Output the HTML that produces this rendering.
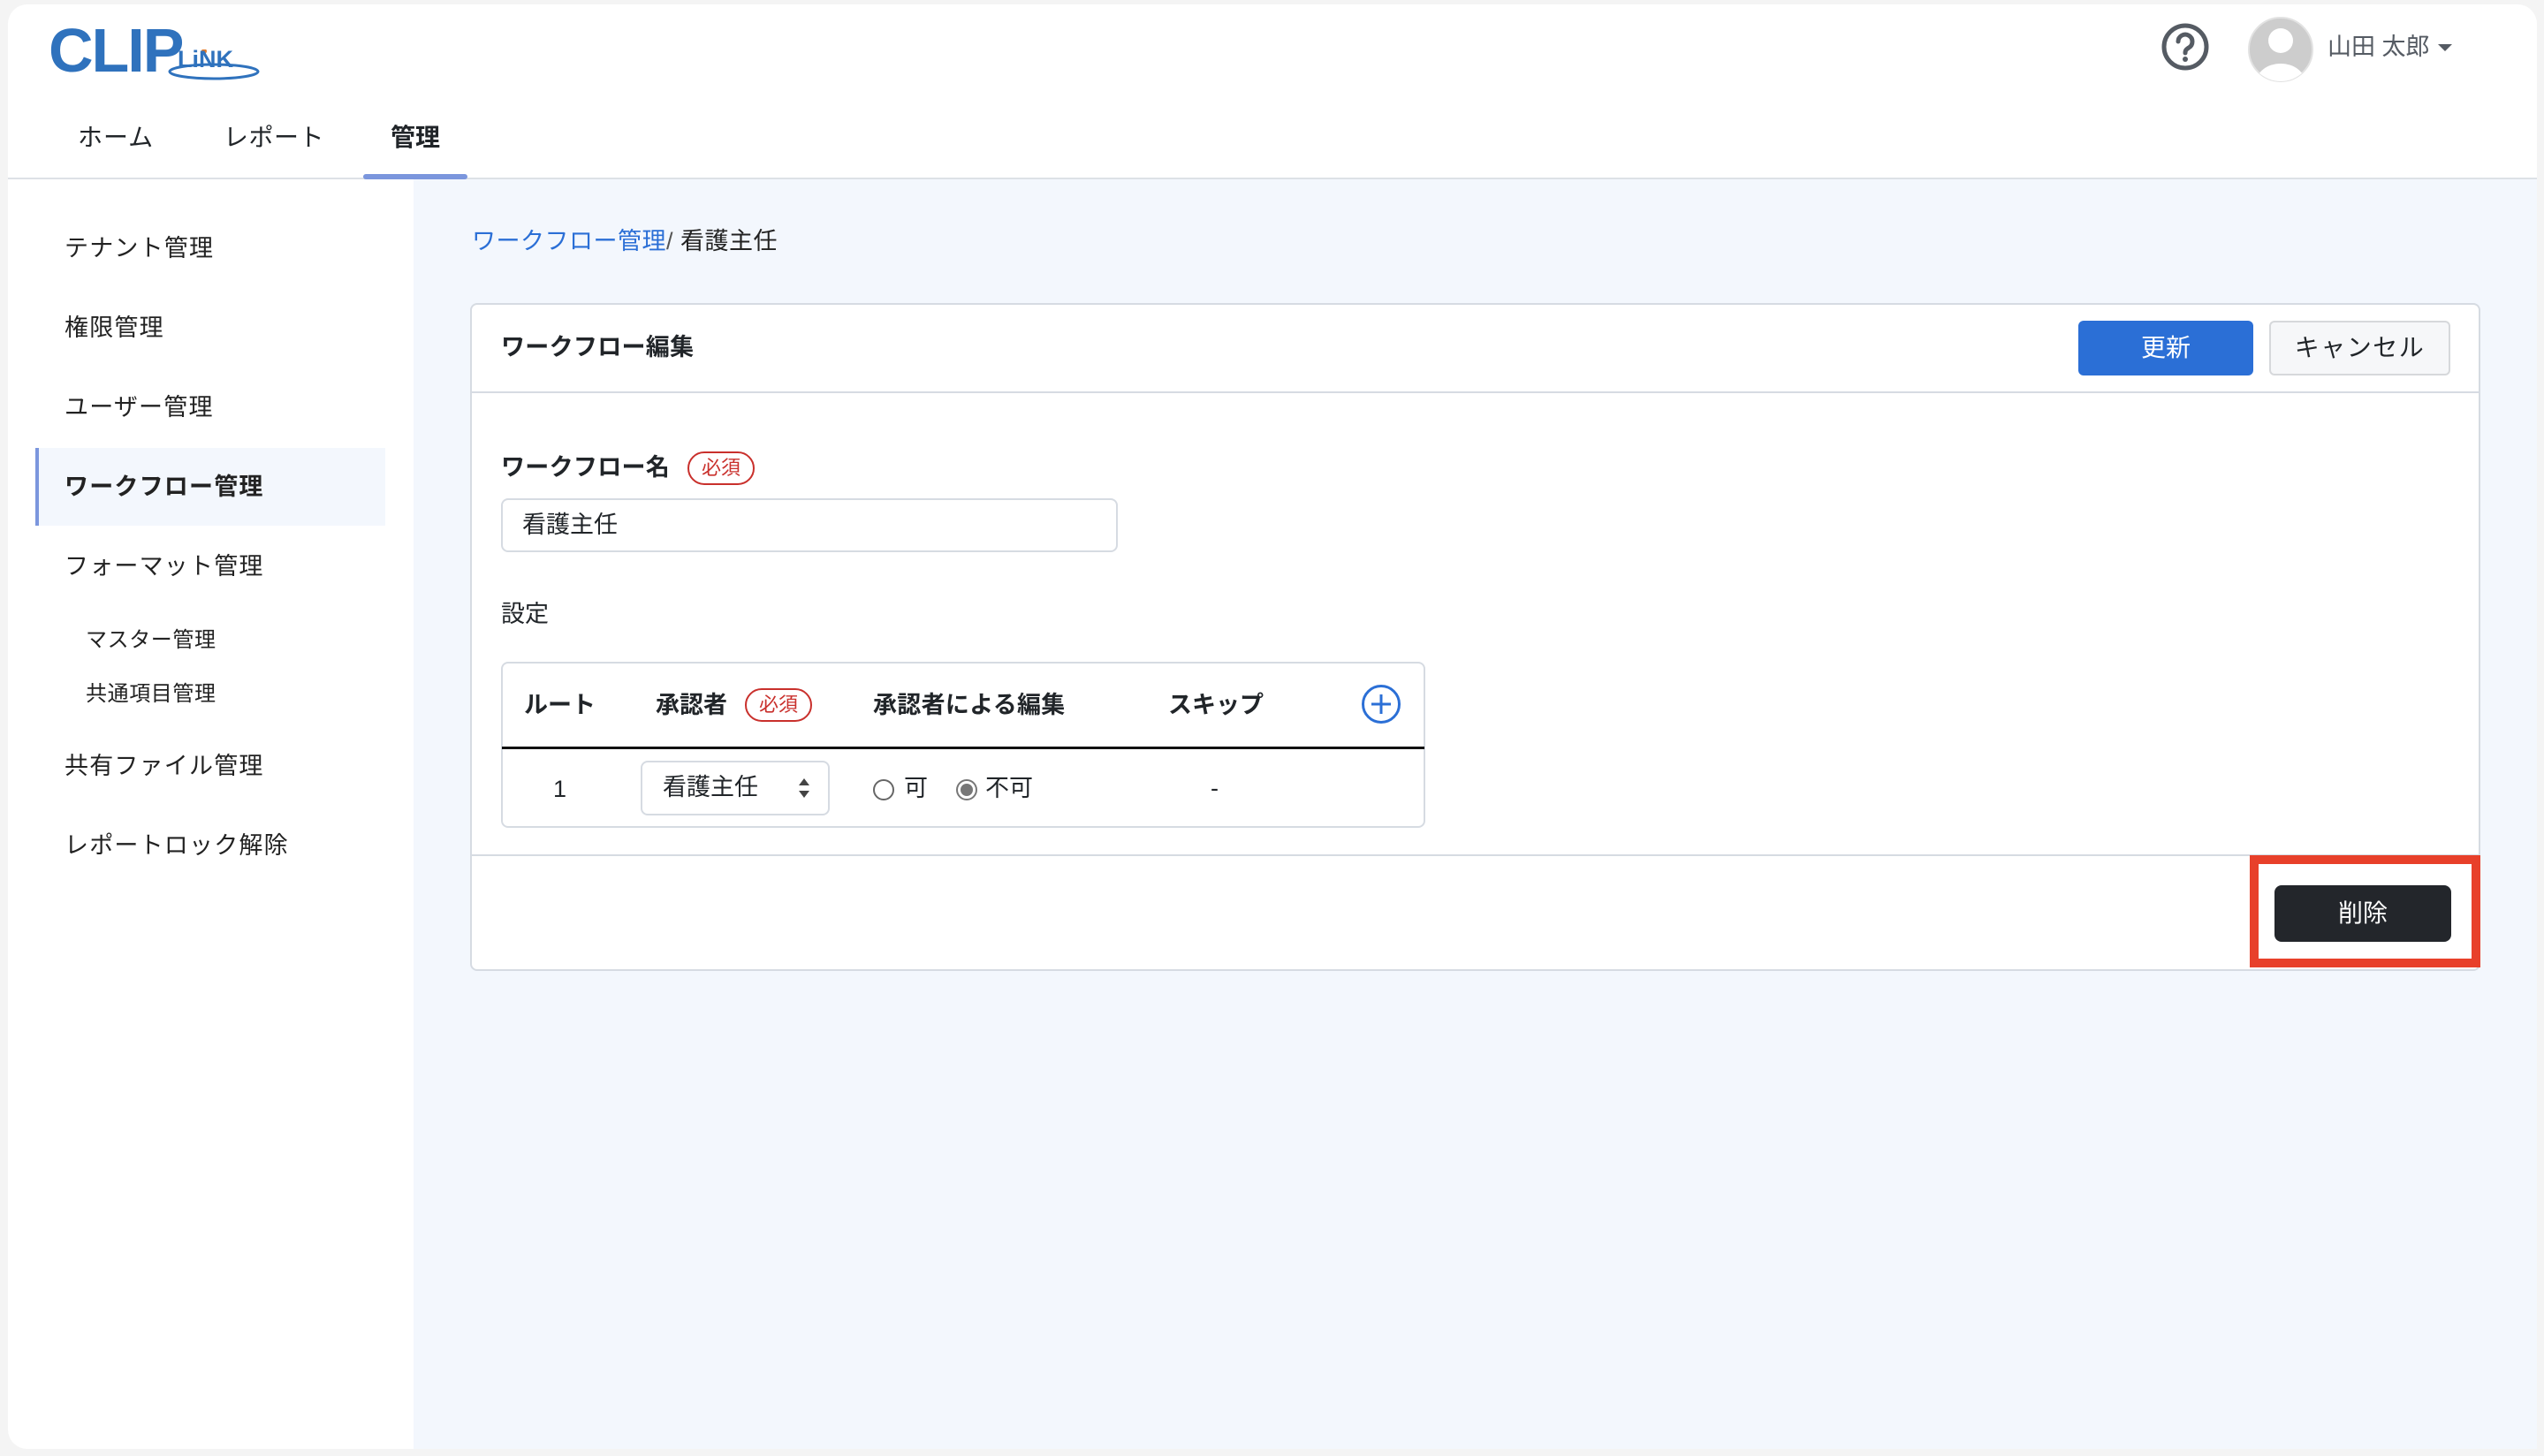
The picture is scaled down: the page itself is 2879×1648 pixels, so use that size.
<!DOCTYPE html>
<html><head><meta charset="utf-8"><style>
*{box-sizing:border-box;margin:0;padding:0}
body{width:2879px;height:1648px;background:#f4f4f4;font-family:"Liberation Sans","Noto Sans CJK JP",sans-serif;color:#212529;position:relative;overflow:hidden}
.abs{position:absolute}
.frame{left:9px;top:5px;width:2862px;height:1635px;background:#fff;border-radius:22px;overflow:hidden}
.main{left:468px;top:203px;width:2403px;height:1437px;background:#f3f7fd}
.t{position:absolute;white-space:nowrap;line-height:1}
.side{font-size:27px;letter-spacing:1.2px;color:#222;left:73px}
.sub{font-size:24px;letter-spacing:0.6px;left:97px;color:#222}
.badge{position:absolute;border:2px solid #c9302c;color:#c9302c;border-radius:20px;font-size:22px;line-height:1;padding:6px 14px}
</style></head><body>
<div class="abs frame"></div>
<div class="abs" style="left:9px;top:201px;width:2862px;height:2px;background:#dde1e6"></div>
<div class="abs main"></div>

<!-- logo -->
<div class="t" style="left:55px;top:22px;font-size:70px;font-weight:bold;color:#2f72bd;letter-spacing:-2px">CLIP</div>
<svg class="abs" style="left:190px;top:56px" width="105" height="40"><ellipse cx="52" cy="25" rx="50" ry="8" fill="none" stroke="#2f72bd" stroke-width="3"/><circle cx="41" cy="2" r="3" fill="#e07b2c"/></svg>
<div class="t" style="left:201px;top:54px;font-size:27px;font-weight:bold;color:#2f72bd;background:transparent">LiNK</div>

<!-- nav -->
<div class="t" style="left:88px;top:142px;font-size:28px;letter-spacing:1px">ホーム</div>
<div class="t" style="left:253px;top:142px;font-size:28px;letter-spacing:0.5px">レポート</div>
<div class="t" style="left:442px;top:142px;font-size:28px;font-weight:bold">管理</div>
<div class="abs" style="left:411px;top:197px;width:118px;height:6px;background:#7b96dd;border-radius:3px"></div>

<!-- header right -->
<svg class="abs" style="left:2445px;top:25px" width="56" height="56"><circle cx="28" cy="28" r="24" fill="none" stroke="#555b63" stroke-width="5"/><path d="M20 22a8 8 0 1 1 12 7c-3 2-4 3-4 6" fill="none" stroke="#555b63" stroke-width="5" stroke-linecap="round"/><circle cx="28" cy="42" r="3" fill="#555b63"/></svg>
<svg class="abs" style="left:2543px;top:18px" width="76" height="76"><defs><clipPath id="c"><circle cx="38" cy="38" r="36"/></clipPath></defs><circle cx="38" cy="38" r="36" fill="#cdcdcd" stroke="#e2e2e2" stroke-width="2"/><g clip-path="url(#c)" fill="#fff"><circle cx="38" cy="28" r="14"/><ellipse cx="38" cy="76" rx="28" ry="22"/></g></svg>
<div class="t" style="left:2634px;top:40px;font-size:27px;color:#555b63">山田 太郎</div>
<svg class="abs" style="left:2759px;top:50px" width="16" height="10"><path d="M0 0h16L8 8z" fill="#555b63"/></svg>

<!-- sidebar -->
<div class="t side" style="top:268px">テナント管理</div>
<div class="t side" style="top:358px">権限管理</div>
<div class="t side" style="top:448px">ユーザー管理</div>
<div class="abs" style="left:40px;top:507px;width:396px;height:88px;background:#f3f7fd;border-left:4px solid #7b96dd"></div>
<div class="t side" style="top:538px;font-weight:bold">ワークフロー管理</div>
<div class="t side" style="top:628px">フォーマット管理</div>
<div class="t sub" style="top:713px">マスター管理</div>
<div class="t sub" style="top:774px">共通項目管理</div>
<div class="t side" style="top:854px">共有ファイル管理</div>
<div class="t side" style="top:944px">レポートロック解除</div>

<!-- breadcrumb -->
<div class="t" style="left:534px;top:260px;font-size:27px;color:#2b6fd6;letter-spacing:0.5px">ワークフロー管理<span style="color:#555">/</span> <span style="color:#222">看護主任</span></div>

<!-- card -->
<div class="abs" style="left:532px;top:343px;width:2275px;height:756px;background:#fff;border:2px solid #d6dbe2;border-radius:8px"></div>
<div class="abs" style="left:534px;top:443px;width:2271px;height:2px;background:#d6dbe2"></div>
<div class="abs" style="left:534px;top:967px;width:2271px;height:2px;background:#d6dbe2"></div>
<div class="t" style="left:567px;top:380px;font-size:27px;font-weight:bold;letter-spacing:0.3px">ワークフロー編集</div>
<div class="abs" style="left:2352px;top:363px;width:198px;height:62px;background:#2b6fd6;border-radius:6px;color:#fff;font-size:28px;text-align:center;line-height:62px">更新</div>
<div class="abs" style="left:2568px;top:363px;width:205px;height:62px;background:#f6f7f9;border:2px solid #d6d8db;border-radius:6px;font-size:28px;text-align:center;line-height:58px;letter-spacing:1.5px">キャンセル</div>

<div class="t" style="left:567px;top:516px;font-size:27px;font-weight:bold;letter-spacing:0.3px">ワークフロー名</div>
<div class="badge" style="left:778px;top:511px">必須</div>
<div class="abs" style="left:567px;top:564px;width:698px;height:61px;border:2px solid #d6dbe2;border-radius:8px"></div>
<div class="t" style="left:591px;top:581px;font-size:27px">看護主任</div>
<div class="t" style="left:567px;top:682px;font-size:27px">設定</div>

<!-- table -->
<div class="abs" style="left:567px;top:749px;width:1046px;height:188px;border:2px solid #d6dbe2;border-radius:8px"></div>
<div class="abs" style="left:568px;top:845px;width:1044px;height:3px;background:#111"></div>
<div class="t" style="left:593px;top:785px;font-size:27px;font-weight:bold">ルート</div>
<div class="t" style="left:742px;top:785px;font-size:27px;font-weight:bold">承認者</div>
<div class="badge" style="left:843px;top:779px">必須</div>
<div class="t" style="left:988px;top:785px;font-size:27px;font-weight:bold;letter-spacing:0.3px">承認者による編集</div>
<div class="t" style="left:1322px;top:785px;font-size:27px;font-weight:bold">スキップ</div>
<svg class="abs" style="left:1539px;top:773px" width="48" height="48"><circle cx="24" cy="24" r="20.5" fill="none" stroke="#2b6fd6" stroke-width="3"/><path d="M24 13v22M13 24h22" stroke="#2b6fd6" stroke-width="3"/></svg>

<div class="t" style="left:626px;top:880px;font-size:27px">1</div>
<div class="abs" style="left:725px;top:861px;width:214px;height:62px;border:2px solid #d6dbe2;border-radius:8px"></div>
<div class="t" style="left:750px;top:878px;font-size:27px">看護主任</div>
<svg class="abs" style="left:903px;top:879px" width="14" height="26"><path d="M1 10L7 2l6 8zM1 16l6 8 6-8z" fill="#444"/></svg>
<svg class="abs" style="left:986px;top:880px" width="28" height="28"><circle cx="14" cy="14" r="11" fill="#fff" stroke="#666" stroke-width="2"/></svg>
<div class="t" style="left:1023px;top:879px;font-size:27px">可</div>
<svg class="abs" style="left:1080px;top:880px" width="28" height="28"><circle cx="14" cy="14" r="11" fill="#fff" stroke="#777" stroke-width="2"/><circle cx="14" cy="14" r="7" fill="#777"/></svg>
<div class="t" style="left:1115px;top:879px;font-size:27px">不可</div>
<div class="t" style="left:1370px;top:879px;font-size:27px">-</div>

<!-- delete -->
<div class="abs" style="left:2546px;top:968px;width:261px;height:127px;border:10px solid #e8402a"></div>
<div class="abs" style="left:2574px;top:1002px;width:200px;height:64px;background:#23262b;border-radius:8px;color:#fff;font-size:28px;text-align:center;line-height:64px">削除</div>
</body></html>
